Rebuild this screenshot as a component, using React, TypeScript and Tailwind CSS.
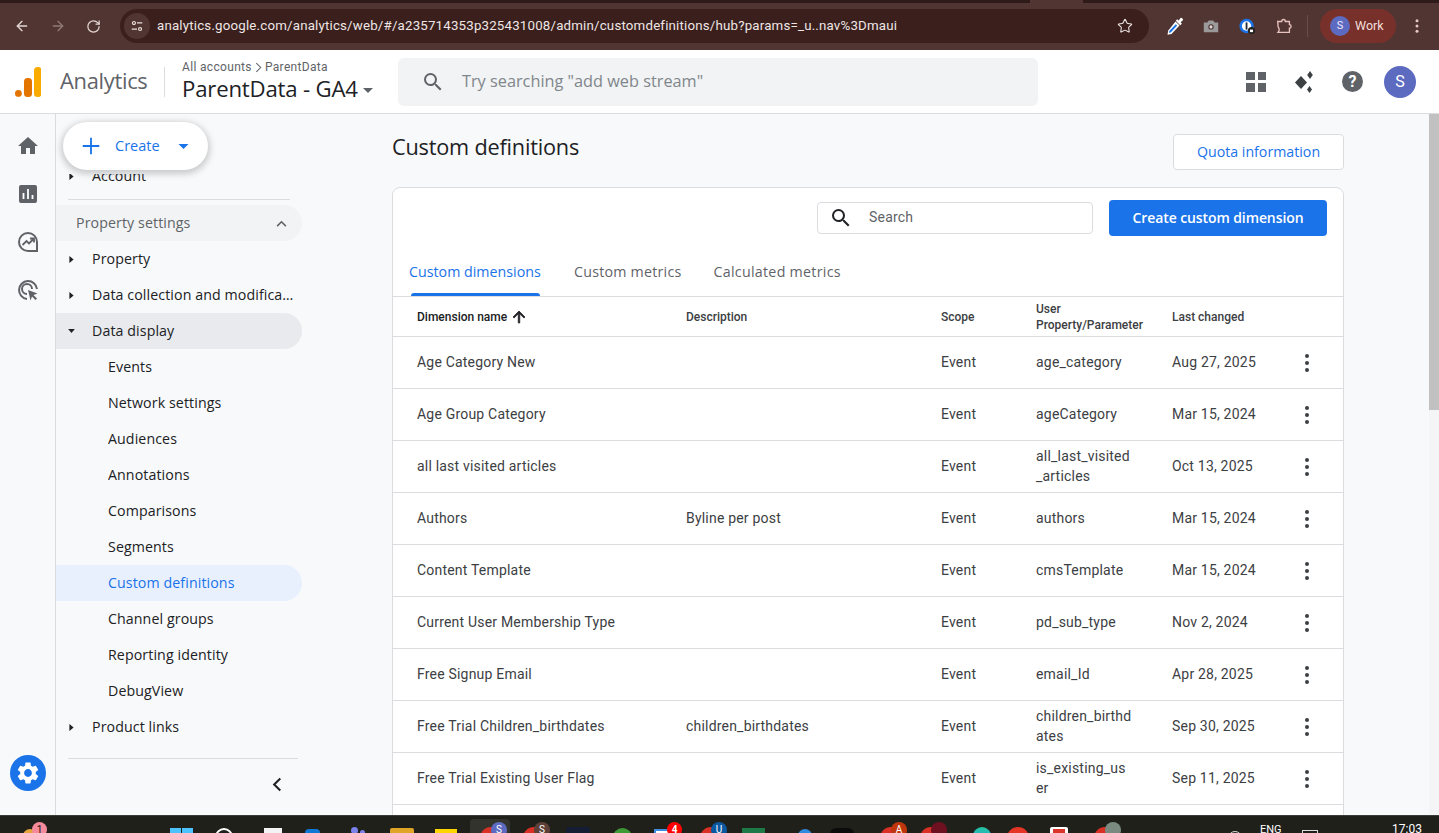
import React from "react";
import { ArrowLeft, ArrowRight, RotateCw, Star } from "lucide-react";

const SANS = "font-['Roboto','Liberation_Sans',sans-serif]";
const GS = "font-['Open_Sans','Roboto',sans-serif]";

const SEARCH = "M15.5 14h-.79l-.28-.27A6.471 6.471 0 0 0 16 9.5 6.5 6.5 0 1 0 9.5 16c1.61 0 3.09-.59 4.23-1.57l.27.28v.79l5 4.99L20.49 19l-4.99-5zm-6 0C7.01 14 5 11.99 5 9.5S7.01 5 9.5 5 14 7.01 14 9.5 11.99 14 9.5 14z";
const GEAR = "M19.14 12.94c.04-.3.06-.61.06-.94 0-.32-.02-.64-.07-.94l2.03-1.58c.18-.14.23-.41.12-.61l-1.92-3.32c-.12-.22-.37-.29-.59-.22l-2.39.96c-.5-.38-1.03-.7-1.62-.94l-.36-2.54c-.04-.24-.24-.41-.48-.41h-3.84c-.24 0-.43.17-.47.41l-.36 2.54c-.59.24-1.13.57-1.62.94l-2.39-.96c-.22-.08-.47 0-.59.22L2.74 8.87c-.12.21-.08.47.12.61l2.03 1.58c-.05.3-.09.63-.09.94s.02.64.07.94l-2.03 1.58c-.18.14-.23.41-.12.61l1.92 3.32c.12.22.37.29.59.22l2.39-.96c.5.38 1.03.7 1.62.94l.36 2.54c.05.24.24.41.48.41h3.84c.24 0 .44-.17.47-.41l.36-2.54c.59-.24 1.13-.56 1.62-.94l2.39.96c.22.08.47 0 .59-.22l1.92-3.32c.12-.22.07-.47-.12-.61l-2.01-1.58zM12 15.6c-1.98 0-3.6-1.62-3.6-3.6s1.62-3.6 3.6-3.6 3.6 1.62 3.6 3.6-1.62 3.6-3.6 3.6z";

function Dots({ className }: { className: string }) {
  return (
    <svg viewBox="0 0 24 24" className={className} fill="currentColor">
      <circle cx="12" cy="5" r="2" />
      <circle cx="12" cy="12" r="2" />
      <circle cx="12" cy="19" r="2" />
    </svg>
  );
}

function BrowserBar() {
  return (
    <div className={`${SANS} flex h-[50px] shrink-0 flex-col bg-[#513533]`}>
      <div className="flex h-[3px] shrink-0 bg-[#2e1a18]">
        <div className="ml-[1030px] w-[53px] bg-[#513533]" />
      </div>
      <div className="flex flex-1 items-start pt-[6px]">
        <div className="flex h-[34px] w-[120px] shrink-0 items-center text-[#e3d7d5]">
          <ArrowLeft className="ml-[14px] h-[16px] w-[16px]" strokeWidth={2} />
          <ArrowRight className="ml-[20px] h-[16px] w-[16px] text-[#8f7a78]" strokeWidth={2} />
          <RotateCw className="ml-[20px] h-[15px] w-[15px]" strokeWidth={2} />
        </div>
        <div className="flex h-[34px] w-[1029px] shrink-0 items-center rounded-full bg-[#3a1f1c] pl-[4px] pr-[16px]">
          <div className="flex h-[26px] w-[26px] items-center justify-center rounded-full bg-[#513533]">
            <svg viewBox="0 0 16 16" className="h-[14px] w-[14px]" fill="none" stroke="#eadfdd" strokeWidth="1.3">
              <circle cx="4.5" cy="4.5" r="1.7" />
              <path d="M8 4.5h6M2 11.5h6" />
              <circle cx="11.5" cy="11.5" r="1.7" />
            </svg>
          </div>
          <span className="ml-[7px] flex-1 text-[13.3px] tracking-[0.185px] text-[#eee6e5]">
            analytics.google.com/analytics/web/#/a235714353p325431008/admin/customdefinitions/hub?params=_u..nav%3Dmaui
          </span>
          <Star className="h-[16px] w-[16px] text-[#eee6e5]" strokeWidth={1.6} />
        </div>
        <div className="flex h-[34px] flex-1 items-center">
          <svg viewBox="0 0 20 20" className="ml-[16px] h-[20px] w-[20px]">
            <path d="M12.200 3.200l1.500 1.200 1.800-2.400c.8-.8 3.200 1.200 2.400 2.300l-2.300 2 1.300 1.500-1.700 1.500-4.400-4.500z" fill="#fff" />
            <path d="M10.500 5.500l4 4-8 8.500-4 .8.800-4.300z" fill="#fff" />
            <path d="M10.800 8.200l1.400 1.400-6.500 6.900-1.700.3.300-1.800z" fill="#1a73e8" />
          </svg>
          <svg viewBox="0 0 20 20" className="ml-[17px] h-[18px] w-[18px]">
            <path d="M2 6h4l1.500-2h5L14 6h4v11H2z" fill="#9a9a9a" />
            <circle cx="10" cy="11" r="3" fill="#513533" />
            <circle cx="10" cy="11" r="1.700" fill="#dcdcdc" />
          </svg>
          <svg viewBox="0 0 20 20" className="ml-[18px] h-[18px] w-[18px]">
            <circle cx="9.500" cy="10" r="8" fill="#1a73e8" />
            <circle cx="9.500" cy="10" r="5.200" fill="#fff" />
            <rect x="8.500" y="6" width="2" height="8" fill="#1f2937" />
            <circle cx="15" cy="15" r="4" fill="#222" />
            <rect x="13.300" y="14" width="3.400" height="2.800" fill="#fff" />
          </svg>
          <svg viewBox="0 0 20 20" className="ml-[19px] h-[18px] w-[18px]" fill="none" stroke="#e8c2bd" strokeWidth="1.500">
            <path d="M3 5h4.500c0-3 4-3 4 0H16v3.500c2.500 0 2.500 4 0 4V17H3.500c1.500-1.500 1.500-4.500 0-6z" />
          </svg>
          <div className="ml-[14px] h-[22px] w-px bg-[#6b4c4a]" />
          <div className="ml-[12px] flex h-[34px] w-[76px] items-center rounded-full bg-[#78302a] pl-[10px]">
            <div className="flex h-[20px] w-[20px] items-center justify-center rounded-full bg-[#5c6bc0] text-[11px] text-[#f0e8ff]">S</div>
            <span className="ml-[5px] text-[12.500px] text-[#f3dfdc]">Work</span>
          </div>
          <Dots className="ml-[12px] h-[18px] w-[18px] text-[#e8c8c4]" />
        </div>
      </div>
    </div>
  );
}

function AppHeader() {
  return (
    <div className="flex h-[64px] shrink-0 items-center border-b border-[#dadce0] bg-white">
      <svg viewBox="0 0 26 30" className="ml-[15px] h-[30px] w-[26px] shrink-0">
        <circle cx="3.400" cy="26.400" r="3.400" fill="#e37400" />
        <rect x="9" y="11" width="8" height="19" rx="3.500" fill="#e37400" />
        <rect x="19" y="0" width="7.500" height="30" rx="3.500" fill="#f9ab00" />
      </svg>
      <span className={`${GS} ml-[19px] w-[89px] text-[21.900px] tracking-[-0.3px] text-[#5f6368]`}>Analytics</span>
      <div className="ml-[15px] h-[30px] w-px bg-[#dadce0]" />
      <div className="ml-[17px] flex w-[216px] flex-col">
        <div className={`${SANS} flex items-center text-[12px] leading-[16px] tracking-[0.33px] text-[#5f6368]`}>
          All accounts
          <svg viewBox="0 0 8 12" className="mx-[3px] h-[11px] w-[7px]" fill="none" stroke="#5f6368" strokeWidth="1.200"><path d="M1.500 1l5 5-5 5" /></svg>
          ParentData
        </div>
        <div className={`${GS} flex items-center pb-[2px] text-[22.200px] leading-[27px] tracking-[-0.2px] text-[#202124]`}>
          ParentData - GA4
          <svg viewBox="0 0 10 5" className="ml-[5px] mt-[4px] h-[5px] w-[10px]" fill="#5f6368"><path d="M0 0h10L5 5z" /></svg>
        </div>
      </div>
      <div className="flex h-[48px] w-[640px] items-center rounded-[6px] bg-[#f1f3f4] pl-[23px]">
        <svg viewBox="0 0 24 24" className="h-[24px] w-[24px]" fill="#5f6368"><path d={SEARCH} /></svg>
        <span className={`${GS} ml-[17px] pb-[1px] text-[16.300px] text-[#80868b]`}>Try searching "add web stream"</span>
      </div>
      <div className="ml-[208px] grid h-[20px] w-[20px] grid-cols-2 gap-[3px]">
        <div className="bg-[#5f6368]" /><div className="bg-[#5f6368]" /><div className="bg-[#5f6368]" /><div className="bg-[#5f6368]" />
      </div>
      <svg viewBox="0 0 24 24" className="ml-[26px] h-[24px] w-[24px]" fill="#3c4043">
        <path d="M9 6l6 6.500-6 6.500-6-6.500z" />
        <path d="M18 1l2.800 4-2.800 4-2.800-4z" />
        <path d="M17.500 16l2.500 3.500-2.500 3.500-2.500-3.500z" />
      </svg>
      <div className={`${SANS} ml-[26px] flex h-[21px] w-[21px] items-center justify-center rounded-full bg-[#5f6368] text-[16px] font-bold text-white`}>?</div>
      <div className={`${SANS} ml-[21px] flex h-[32px] w-[32px] items-center justify-center rounded-full bg-[#5c6bc0] text-[16px] text-white`}>S</div>
    </div>
  );
}

function Rail() {
  return (
    <div className="flex w-[56px] shrink-0 flex-col items-center border-r border-[#dadce0] pb-[24px] pt-[20px]">
      <svg viewBox="0 0 24 24" className="h-[24px] w-[24px]" fill="#5f6368"><path d="M10 20v-6h4v6h5v-8h3L12 3 2 12h3v8z" /></svg>
      <svg viewBox="0 0 24 24" className="mt-[24px] h-[24px] w-[24px]">
        <rect x="3" y="3" width="18" height="18" rx="2" fill="#5f6368" />
        <path d="M7.500 11v6M12 7v10M16.500 13v4" stroke="#fff" strokeWidth="1.800" />
      </svg>
      <svg viewBox="0 0 24 24" className="mt-[24px] h-[24px] w-[24px]" fill="none" stroke="#5f6368" strokeWidth="2">
        <path d="M21 12a9 9 0 1 0-9 9h9z" />
        <path d="M6.500 15l4-4 2.500 2.500 4.500-4.500M14 8.500h4v4" strokeWidth="1.800" />
      </svg>
      <svg viewBox="0 0 24 24" className="mt-[24px] h-[24px] w-[24px]" fill="none" stroke="#5f6368" strokeWidth="2">
        <path d="M11 21a9 9 0 1 1 10-10" />
        <path d="M11 16a5 5 0 1 1 5-5" />
        <path d="M12 12l9.500 3.500-4 1.500 3.500 3.500-1.500 1.500-3.500-3.500-1.500 4z" fill="#5f6368" stroke="none" />
      </svg>
      <div className="mt-auto flex h-[36px] w-[36px] items-center justify-center rounded-full bg-[#1a73e8]">
        <svg viewBox="0 0 24 24" className="h-[26px] w-[26px]" fill="#fff"><path d={GEAR} /></svg>
      </div>
    </div>
  );
}

function CaretRight() {
  return <svg viewBox="0 0 6 10" className="absolute left-[13px] top-[15px] h-[7px] w-[5px]" fill="#202124"><path d="M0 0l6 5-6 5z" /></svg>;
}
function CaretDown() {
  return <svg viewBox="0 0 10 6" className="absolute left-[12px] top-[16px] h-[4px] w-[7px]" fill="#202124"><path d="M0 0h10L5 6z" /></svg>;
}

function NavRow({ label, caret, cls = "", sub }: { label: string; caret?: "r" | "d"; cls?: string; sub?: boolean }) {
  return (
    <div className={`relative flex h-[36px] w-[246px] items-center rounded-r-full ${sub ? "pl-[52px]" : "pl-[36px]"} ${cls}`}>
      {caret === "r" && <CaretRight />}
      {caret === "d" && <CaretDown />}
      <span className="w-[202px] truncate">{label}</span>
    </div>
  );
}

function Sidebar() {
  return (
    <div className={`${GS} w-[256px] shrink-0 pt-[44px] text-[14.200px] tracking-[0.1px] text-[#202124]`}>
      <NavRow label="Account" caret="r" />
      <div className="ml-[12px] mt-[5px] h-px w-[222px] bg-[#dadce0]" />
      <div className="mt-[5px] flex h-[36px] w-[246px] items-center justify-between rounded-r-full bg-[#f1f3f4] pl-[20px] pr-[15px] text-[#5f6368]">
        Property settings
        <svg viewBox="0 0 12 8" className="h-[7px] w-[11px]" fill="none" stroke="#5f6368" strokeWidth="1.800"><path d="M1 7l5-5 5 5" /></svg>
      </div>
      <NavRow label="Property" caret="r" />
      <NavRow label="Data collection and modification" caret="r" />
      <NavRow label="Data display" caret="d" cls="bg-[#e8eaed]" />
      <NavRow label="Events" sub />
      <NavRow label="Network settings" sub />
      <NavRow label="Audiences" sub />
      <NavRow label="Annotations" sub />
      <NavRow label="Comparisons" sub />
      <NavRow label="Segments" sub />
      <NavRow label="Custom definitions" sub cls="bg-[#e8f0fe] text-[#1a73e8]" />
      <NavRow label="Channel groups" sub />
      <NavRow label="Reporting identity" sub />
      <NavRow label="DebugView" sub />
      <NavRow label="Product links" caret="r" />
      <div className="ml-[12px] mt-[13px] h-px w-[230px] bg-[#dadce0]" />
      <div className="flex w-[246px] justify-end pr-[20px] pt-[18px]">
        <svg viewBox="0 0 10 16" className="h-[15px] w-[10px]" fill="none" stroke="#202124" strokeWidth="2.200"><path d="M8.500 1.500L2 8l6.500 6.500" /></svg>
      </div>
    </div>
  );
}

const ROWS: [string, string, string, string][] = [
  ["Age Category New", "", "age_category", "Aug 27, 2025"],
  ["Age Group Category", "", "ageCategory", "Mar 15, 2024"],
  ["all last visited articles", "", "all_last_visited_articles", "Oct 13, 2025"],
  ["Authors", "Byline per post", "authors", "Mar 15, 2024"],
  ["Content Template", "", "cmsTemplate", "Mar 15, 2024"],
  ["Current User Membership Type", "", "pd_sub_type", "Nov 2, 2024"],
  ["Free Signup Email", "", "email_Id", "Apr 28, 2025"],
  ["Free Trial Children_birthdates", "children_birthdates", "children_birthdates", "Sep 30, 2025"],
  ["Free Trial Existing User Flag", "", "is_existing_user", "Sep 11, 2025"],
];

function Table() {
  return (
    <div className={SANS}>
      <div className="grid h-[40px] grid-cols-[269px_255px_95px_136px_1fr] items-center border-b border-[#dadce0] pl-[24px] text-[12px] font-medium leading-[16px] text-[#3c4043]">
        <div className="flex items-center text-[#202124]">
          Dimension name
          <svg viewBox="0 0 24 24" className="ml-[3px] h-[18px] w-[18px]" fill="#202124" stroke="#202124" strokeWidth="1"><path d="M4 12l1.410 1.410L11 7.830V20h2V7.830l5.580 5.590L20 12l-8-8-8 8z" /></svg>
        </div>
        <div>Description</div>
        <div>Scope</div>
        <div>User<br />Property/Parameter</div>
        <div>Last changed</div>
      </div>
      {ROWS.map(([name, desc, param, date]) => (
        <div key={name} className="grid h-[52px] grid-cols-[269px_255px_95px_136px_1fr] items-center border-b border-[#dadce0] pb-[2px] pl-[24px] text-[14px] leading-[20px] tracking-[0.2px] text-[#3c4043]">
          <div>{name}</div>
          <div>{desc}</div>
          <div>Event</div>
          <div className="w-[96px] break-all">{param}</div>
          <div className="flex items-center justify-between pr-[24px]">
            {date}
            <Dots className="mt-[2px] h-[24px] w-[24px] text-[#3c4043]" />
          </div>
        </div>
      ))}
      <div className="grid h-[52px] grid-cols-[269px_255px_95px_136px_1fr] pl-[24px] pt-[6px] text-[14px] tracking-[0.2px] text-[#3c4043]">
        <div /><div /><div />
        <div className="w-[96px] break-all leading-[20px]">sign_up_trial_id</div>
      </div>
    </div>
  );
}

function Main() {
  return (
    <div className="min-w-0 flex-1 overflow-hidden pl-[80px] pr-[85px] pt-[20px]">
      <div className="flex h-[36px] items-center justify-between">
        <h1 className={`${GS} mb-[10px] text-[21.700px] tracking-[-0.2px] text-[#202124]`}>Custom definitions</h1>
        <div className={`${GS} flex h-[36px] w-[171px] items-center justify-center rounded-[4px] border border-[#dadce0] bg-white text-[14.200px] text-[#1a73e8]`}>Quota information</div>
      </div>
      <div className="mt-[17px] rounded-t-[8px] border border-[#dadce0] bg-white">
        <div className="flex items-start justify-end pr-[16px] pt-[12px]">
          <div className={`${SANS} mt-[2px] flex h-[32px] w-[276px] items-center rounded-[4px] border border-[#dadce0] pl-[11px] text-[14px] tracking-[0.2px] text-[#5f6368]`}>
            <svg viewBox="0 0 24 24" className="h-[24px] w-[24px]" fill="#202124"><path d={SEARCH} /></svg>
            <span className="mb-[2px] ml-[16px]">Search</span>
          </div>
          <div className={`${GS} ml-[16px] flex h-[36px] w-[218px] items-center justify-center rounded-[4px] bg-[#1a73e8] pb-[2px] text-[14px] font-semibold tracking-[-0.1px] text-white`}>Create custom dimension</div>
        </div>
        <div className={`${GS} mt-[13px] flex h-[48px] border-b border-[#dadce0] pl-[16px] text-[14.250px] text-[#5f6368]`}>
          <div className="relative flex h-[47px] w-[133px] items-center pb-[2px] text-[#1a73e8]">
            Custom dimensions
            <div className="absolute bottom-0 left-[2px] h-[3px] w-[129px] rounded-t-[3px] bg-[#1a73e8]" />
          </div>
          <div className="ml-[32px] flex h-[47px] items-center pb-[2px] tracking-[0.22px]">Custom metrics</div>
          <div className="ml-[32px] flex h-[47px] items-center pb-[2px] tracking-[0.28px]">Calculated metrics</div>
        </div>
        <Table />
      </div>
    </div>
  );
}

function ChromeProfile({ badge, letter, active }: { badge: string; letter: string; active?: boolean }) {
  return (
    <div className="relative h-full w-full overflow-hidden">
      {active && <div className="absolute inset-x-0 bottom-0 top-[3px] rounded-t-[4px] bg-[#33332e]" />}
      <div className="absolute left-[10px] top-[11px] h-[22px] w-[22px] rounded-full bg-[#d93025]" />
      <div className={`absolute left-[21px] top-[6px] flex h-[16px] w-[16px] items-center justify-center rounded-full text-[10px] leading-none text-white ${badge}`}>{letter}</div>
    </div>
  );
}

function Taskbar() {
  return (
    <div className={`${SANS} flex h-[18px] shrink-0 overflow-hidden border-t border-[#3b3b37] bg-[#20201b]`}>
      <div className="relative ml-[23px] h-full w-[24px] shrink-0">
        <div className="absolute left-0 top-[13px] h-[14px] w-[14px] rounded-full bg-[#e8a33d]" />
        <div className="absolute left-[9px] top-[6px] flex h-[15px] w-[15px] items-center justify-center rounded-full bg-[#f48a9a] text-[10px] leading-none text-[#111]">1</div>
      </div>
      <div className="ml-[123px] mt-[12px] grid h-[24px] w-[23px] shrink-0 grid-cols-2 gap-[1px]">
        <div className="bg-[#4cc2ff]" /><div className="bg-[#4cc2ff]" />
      </div>
      <div className="ml-[22px] mt-[12px] h-[18px] w-[18px] shrink-0 rounded-full border-[2px] border-white" />
      <div className="ml-[31px] mt-[12px] h-[20px] w-[18px] shrink-0 bg-[#f3f3f3]" />
      <div className="ml-[23px] mt-[13px] h-[20px] w-[15px] shrink-0 rounded-t-[4px] bg-[#0f78d4]" />
      <div className="ml-[31px] mt-[11px] flex h-[20px] w-[16px] shrink-0 items-start gap-[2px]">
        <div className="h-[7px] w-[7px] rounded-full bg-[#7b83eb]" />
        <div className="mt-[3px] h-[5px] w-[5px] rounded-full bg-[#7b83eb]" />
      </div>
      <div className="ml-[23px] mt-[12px] h-[20px] w-[24px] shrink-0 rounded-t-[2px] bg-[#e0a526]" />
      <div className="ml-[21px] mt-[13px] h-[20px] w-[22px] shrink-0 bg-[#ffd500]" />
      <div className="ml-[13px] h-full w-[40px] shrink-0">
        <ChromeProfile badge="bg-[#5c6bc0]" letter="S" active />
      </div>
      <div className="ml-[3px] h-full w-[40px] shrink-0">
        <ChromeProfile badge="bg-[#5d4037]" letter="S" />
      </div>
      <div className="ml-[13px] mt-[11px] h-[20px] w-[24px] shrink-0 rounded-t-[2px] bg-[#141d33]" />
      <div className="ml-[23px] mt-[12px] h-[19px] w-[19px] shrink-0 rounded-full bg-[#3f9b35]" />
      <div className="relative ml-[22px] h-full w-[28px] shrink-0">
        <div className="absolute left-0 top-[13px] h-[12px] w-[16px] border-[2px] border-[#3d8ee0] bg-white" />
        <div className="absolute left-[13px] top-[6px] flex h-[15px] w-[15px] items-center justify-center rounded-full bg-[#f00] text-[10px] font-bold leading-none text-white">4</div>
      </div>
      <div className="ml-[8px] h-full w-[40px] shrink-0">
        <ChromeProfile badge="bg-[#0b57a0]" letter="U" />
      </div>
      <div className="ml-[12px] mt-[12px] h-[20px] w-[23px] shrink-0 bg-[#1d7a46]" />
      <div className="ml-[33px] mt-[13px] h-[16px] w-[14px] shrink-0 rounded-t-full bg-[#2f8ae0]" />
      <div className="ml-[18px] mt-[12px] h-[20px] w-[24px] shrink-0 rounded-t-[6px] bg-[#0b0b0b]" />
      <div className="ml-[16px] h-full w-[40px] shrink-0">
        <ChromeProfile badge="bg-[#bf360c]" letter="A" />
      </div>
      <div className="h-full w-[40px] shrink-0">
        <ChromeProfile badge="bg-[#6d1020]" letter="" />
      </div>
      <div className="ml-[23px] mt-[11px] h-[18px] w-[18px] shrink-0 rounded-full bg-gradient-to-b from-[#27c4a0] to-[#2d9fe0]" />
      <div className="ml-[16px] mt-[11px] h-[22px] w-[22px] shrink-0 rounded-full bg-[#e53527]" />
      <div className="ml-[21px] mt-[11px] h-[18px] w-[18px] shrink-0 rounded-t-[2px] bg-white pl-[3px] pt-[2px]">
        <div className="h-[4px] w-[12px] bg-[#d9352a]" />
      </div>
      <div className="ml-[16px] h-full w-[40px] shrink-0">
        <ChromeProfile badge="bg-[#7a8a80]" letter="" />
      </div>
      <div className="ml-[104px] mt-[15px] h-[14px] w-[14px] shrink-0 rounded-full border border-[#ddd]" />
      <div className="ml-[18px] mt-[7px] w-[24px] shrink-0 text-[11px] leading-[14px] text-white">ENG</div>
      <div className="ml-[18px] mt-[14px] h-[12px] w-[16px] shrink-0 border border-[#ddd]" />
      <div className="ml-[74px] mt-[6px] shrink-0 text-[12px] leading-[15px] text-white">17:03</div>
    </div>
  );
}

export default function App() {
  return (
    <div className="flex h-[833px] w-[1439px] flex-col overflow-hidden bg-[#f8f9fa]">
      <BrowserBar />
      <AppHeader />
      <div className="relative flex min-h-0 flex-1">
        <Rail />
        <Sidebar />
        <Main />
        <div className="w-[10px] shrink-0 bg-[#f4f5f6]">
          <div className="h-[296px] bg-[#c1c1c1]" />
        </div>
        <div className="absolute left-[56px] top-0 h-[60px] w-[256px] bg-[#f8f9fa]" />
        <div className={`${GS} absolute left-[63px] top-[8px] flex h-[48px] w-[145px] items-center rounded-full bg-white pl-[17px] text-[14.500px] text-[#1a73e8] shadow-[0_2px_6px_2px_rgba(60,64,67,0.25)]`}>
          <svg viewBox="0 0 24 24" className="h-[22px] w-[22px]" fill="none" stroke="#1a73e8" strokeWidth="2"><path d="M12 3v18M3 12h18" /></svg>
          <span className="ml-[13px]">Create</span>
          <svg viewBox="0 0 10 5" className="ml-[18px] h-[5px] w-[11px]" fill="#1a73e8"><path d="M0 0h10L5 5z" /></svg>
        </div>
      </div>
      <Taskbar />
    </div>
  );
}
